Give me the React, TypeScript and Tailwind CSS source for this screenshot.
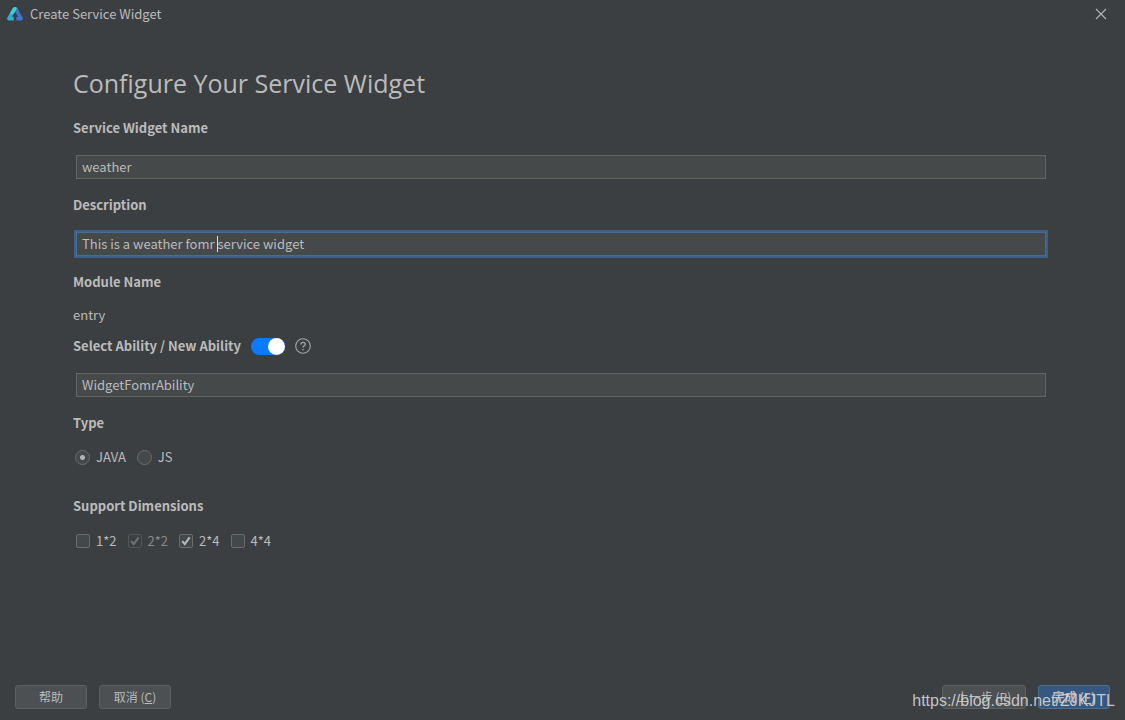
import { useState } from "react";
import type { ReactNode } from "react";

const dimensions = [
  { label: "1*2", checked: false, disabled: false },
  { label: "2*2", checked: true, disabled: true },
  { label: "2*4", checked: true, disabled: false },
  { label: "4*4", checked: false, disabled: false },
];

const inputClass =
  "block h-6 w-full border border-[#646464] bg-[#45494a] px-[5px] pb-[2px] text-[13px] text-[#bbbbbb] outline-none";

const buttonClass =
  "h-6 rounded-[3px] border text-[12px] leading-5 whitespace-nowrap";

function Logo() {
  return (
    <svg width="16" height="14" viewBox="0 0 16 14" aria-hidden="true">
      <path d="M6 1 Q8 -0.8 10 1 L12 4.8 L8.8 5.6 L8 4.4 L5 9.8 H6.8 V13.4 H1.6 Q-0.6 12.8 0.4 10.6 Z" fill="#2bb0d0" />
      <path d="M6 1 Q8 -0.8 10 1 L11.8 4.4 L8.6 5.2 L8 4.4 L6.2 7.4 L2.8 6.6 Z" fill="#43cfd9" />
      <path d="M10 1 L15.6 10.6 Q16.6 12.8 14.4 13.4 H9.4 V10 H11.2 L8 4.4 Z" fill="#3a76d8" />
    </svg>
  );
}

function FieldLabel({ htmlFor, children }: { htmlFor?: string; children: ReactNode }) {
  return (
    <label htmlFor={htmlFor} className="block text-[13px] leading-5 font-bold">
      {children}
    </label>
  );
}

function Tick() {
  return (
    <svg
      className="pointer-events-none absolute inset-0 hidden h-full w-full peer-checked:block"
      viewBox="0 0 14 14"
      fill="none"
      stroke="currentColor"
      strokeWidth="2"
    >
      <path d="M3.2 7.2 L5.8 10.2 L10.6 3.4" />
    </svg>
  );
}

export default function App() {
  const [name, setName] = useState("weather");
  const [description, setDescription] = useState(
    "This is a weather fomr service widget",
  );
  const [ability, setAbility] = useState("WidgetFomrAbility");
  const [isNew, setIsNew] = useState(true);

  return (
    <div className="relative flex min-h-screen flex-col bg-[#3c3f41] font-['Noto_Sans_CJK_SC',sans-serif] text-[13px] text-[#bbbbbb]">
      {/* Title bar */}
      <header className="flex h-7 items-center pr-[18px] pl-[7px]">
        <Logo />
        <span className="ml-[7px] leading-5">Create Service Widget</span>
        <button type="button" aria-label="Close" className="ml-auto">
          <svg width="12" height="12" viewBox="0 0 12 12" stroke="#b4b4b4" strokeWidth="1.1">
            <path d="M1 1 L11 11 M11 1 L1 11" />
          </svg>
        </button>
      </header>

      <main className="pt-[35px] pr-[76px] pl-[73px]">
        <h1 className="font-['Open_Sans',sans-serif] text-[25px] leading-10">
          Configure Your Service Widget
        </h1>

        <div className="mt-[15px]">
          <FieldLabel htmlFor="name">Service Widget Name</FieldLabel>
          <div className="mx-[3px] mt-[17px]">
            <input id="name" className={inputClass} value={name} onChange={(e) => setName(e.target.value)} />
          </div>
        </div>

        <div className="mt-4">
          <FieldLabel htmlFor="description">Description</FieldLabel>
          <div className="relative mx-[3px] mt-[17px]">
            <input
              id="description"
              className="block h-6 w-full border border-[#466d94] bg-[#45494a] px-[5px] pb-[2px] text-[13px] text-[#bbbbbb] ring-2 ring-[#3d6185] outline-none"
              value={description}
              onChange={(e) => setDescription(e.target.value)}
            />
            {/* Text cursor */}
            <span className="absolute top-1 left-[141px] h-4 w-px bg-[#dddddd]" />
          </div>
        </div>

        <div className="mt-4">
          <p className="leading-5 font-bold">Module Name</p>
          <p className="mt-[13px] leading-5">entry</p>
        </div>

        <div className="mt-[11px]">
          <div className="flex h-5 items-center gap-[10px]">
            <FieldLabel htmlFor="ability">Select Ability / New Ability</FieldLabel>
            <button
              type="button"
              role="switch"
              aria-checked={isNew}
              aria-label="New Ability"
              onClick={() => setIsNew(!isNew)}
              className={`flex h-[17px] w-[34px] rounded-full ${isNew ? "justify-end bg-[#0a7bff]" : "justify-start bg-[#6e7173]"}`}
            >
              <span className="size-[17px] rounded-full bg-white" />
            </button>
            <button type="button" aria-label="Help">
              <svg width="16" height="16" viewBox="0 0 16 16" fill="none" stroke="#a5a7a8" strokeWidth="1.1">
                <circle cx="8" cy="8" r="7.3" />
                <path d="M5.9 6.4 C5.9 3.6 10.2 3.7 10.2 6.2 C10.2 7.7 8 7.8 8 9.6" strokeWidth="1.3" />
                <path d="M8 10.9 V12.2" strokeWidth="1.4" />
              </svg>
            </button>
          </div>
          <div className="mx-[3px] mt-[17px]">
            <input id="ability" className={inputClass} value={ability} onChange={(e) => setAbility(e.target.value)} />
          </div>
        </div>

        <fieldset className="mt-4">
          <legend className="leading-5 font-bold">Type</legend>
          <div className="mt-[14px] ml-[2px] flex gap-[11px]">
            {["JAVA", "JS"].map((type) => (
              <label key={type} className="flex h-5 items-center gap-[6px]">
                <input
                  type="radio"
                  name="type"
                  defaultChecked={type === "JAVA"}
                  className="size-[15px] appearance-none rounded-full border border-[#6b6b6b] bg-[#43494a] checked:bg-[radial-gradient(circle,#b4b4b4_2px,transparent_3px)]"
                />
                {type}
              </label>
            ))}
          </div>
        </fieldset>

        <fieldset className="mt-[29px]">
          <legend className="leading-5 font-bold">Support Dimensions</legend>
          <div className="mt-[15px] ml-[3px] flex gap-[11px]">
            {dimensions.map((dimension) => (
              <label
                key={dimension.label}
                className={`flex h-5 items-center gap-[6px] ${dimension.disabled ? "text-[#8a8a8a]" : ""}`}
              >
                <span className={`relative size-[14px] ${dimension.disabled ? "text-[#707070]" : ""}`}>
                  <input
                    type="checkbox"
                    defaultChecked={dimension.checked}
                    disabled={dimension.disabled}
                    className="peer block size-[14px] appearance-none rounded-[2px] border border-[#6b6b6b] bg-[#43494a] disabled:border-[#545556] disabled:bg-[#3c3f41]"
                  />
                  <Tick />
                </span>
                {dimension.label}
              </label>
            ))}
          </div>
        </fieldset>
      </main>

      {/* Dialog buttons */}
      <footer className="mt-auto flex gap-3 px-[15px] pt-4 pb-[11px]">
        <button type="button" className={`${buttonClass} w-[72px] border-[#5e6060] bg-[#4c5052]`}>
          帮助
        </button>
        <button type="button" className={`${buttonClass} w-[72px] border-[#5e6060] bg-[#4c5052]`}>
          取消 (<u>C</u>)
        </button>
        <button type="button" className={`${buttonClass} ml-auto w-[84px] border-[#5e6060] bg-[#4c5052]`}>
          上一步 (<u>P</u>)
        </button>
        <button type="button" className={`${buttonClass} w-[72px] border-[#4c708c] bg-[#365880] font-bold`}>
          完成 (<u>F</u>)
        </button>
      </footer>

      <span className="pointer-events-none absolute right-[10px] bottom-[7px] font-['Liberation_Sans',sans-serif] text-[16px] leading-6 text-[#d4d5d5]/90">
        https://blog.csdn.net/ZJKJTL
      </span>
    </div>
  );
}
